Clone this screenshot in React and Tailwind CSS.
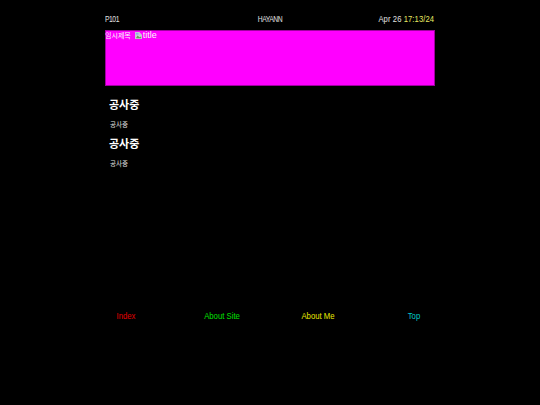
import { useState } from 'react'

const font = "font-['Liberation_Sans','Noto_Sans_CJK_KR',sans-serif]"

function BrokenImage() {
  return (
    <svg width="7" height="7" viewBox="0 0 8 8" className="inline-block mr-px">
      <path d="M0 0h5l3 3v5H0z" fill="#c8c8d8" />
      <path d="M1 7l2-3 2 2 2-1v2z" fill="#6a9a5a" />
      <rect x="1" y="1" width="3" height="2" fill="#8aa8e8" />
    </svg>
  )
}

function Section() {
  return (
    <div>
      <h2 className="text-[11px] leading-[14px] font-bold text-white">공사중</h2>
      <p className="ml-px mt-[8px] text-[6.5px] leading-[9px] text-[#e0e0e0]">공사중</p>
    </div>
  )
}

export default function App() {
  const [links] = useState([
    { label: 'Index', color: 'text-[#e00000]' },
    { label: 'About Site', color: 'text-[#00e000]' },
    { label: 'About Me', color: 'text-[#e8e800]' },
    { label: 'Top', color: 'text-[#00c8c8]' },
  ])

  return (
    <div className={`w-[540px] h-[405px] bg-black text-white overflow-hidden flex flex-col items-center ${font}`}>
      <div className="w-[330px] mt-[15px] h-[9px] grid grid-cols-3 items-center text-[9px] leading-[9px] text-[#e0e0e0]">
        <span className="origin-left scale-x-[0.75] tracking-[-0.6px]">P101</span>
        <span className="text-center scale-x-[0.75] tracking-[-0.6px]">HAYANN</span>
        <span className="text-right origin-right scale-x-[0.85] tracking-[0.1px] pr-px">
          Apr 26 <span className="text-[#e8e860]">17:13/24</span>
        </span>
      </div>
      <div className="w-[330px] h-[56px] mt-[6px] bg-[#ff00ff] border border-[#a000a0] text-[7px] leading-[9px] text-[#f8f8f8]">
        <div className="-ml-px flex items-center gap-[4px]">
          <span>임시제목</span>
          <span className="flex items-center text-[9px]">
            <BrokenImage />title
          </span>
        </div>
      </div>
      <div className="w-[330px] pl-[4px] mt-[12px] flex flex-col gap-[8px]">
        <Section />
        <Section />
      </div>
      <div className="w-[384px] mt-[144px] grid grid-cols-4 text-center text-[9px] leading-[9px]">
        {links.map((l) => (
          <a key={l.label} className={`scale-x-[0.86] ${l.color}`}>{l.label}</a>
        ))}
      </div>
    </div>
  )
}
